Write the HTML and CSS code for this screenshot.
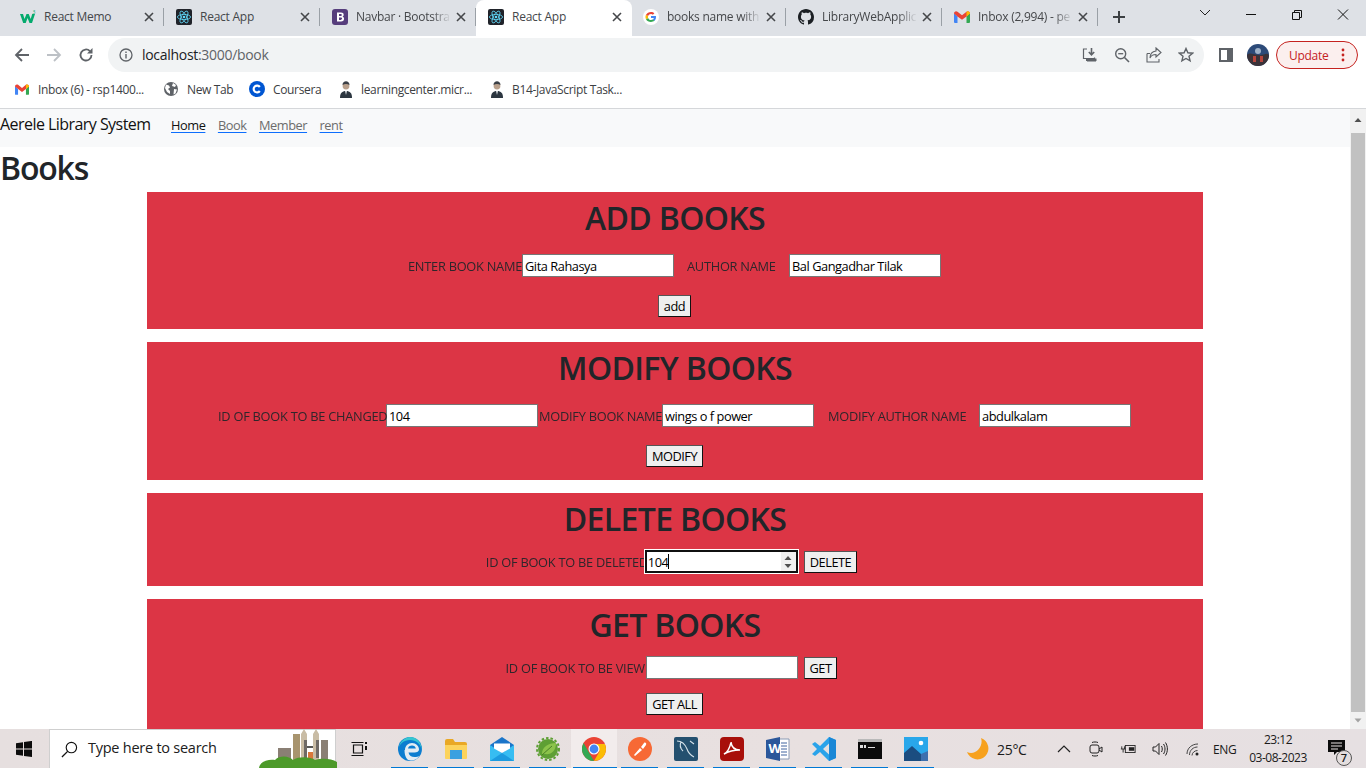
FILE: index.html
```html
<!DOCTYPE html>
<html lang="en">
<head>
<meta charset="utf-8">
<title>React App</title>
<link rel="stylesheet" href="styles.css">
</head>
<body>
<svg class="sprite" width="0" height="0">
  <symbol id="react" viewBox="0 0 16 16"><rect width="16" height="16" rx="2" fill="#20232a"/><g fill="none" stroke="#61dafb" stroke-width=".8"><ellipse cx="8" cy="8" rx="6.6" ry="2.6"/><ellipse cx="8" cy="8" rx="6.6" ry="2.6" transform="rotate(60 8 8)"/><ellipse cx="8" cy="8" rx="6.6" ry="2.6" transform="rotate(120 8 8)"/></g><circle cx="8" cy="8" r="1.3" fill="#61dafb"/></symbol>
  <symbol id="close" viewBox="0 0 10 10"><path d="M1 1l8 8M9 1l-8 8" stroke="#45474a" stroke-width="1.6" fill="none"/></symbol>
  <symbol id="gmail" viewBox="0 0 16 12"><path d="M0 2v9a1 1 0 0 0 1 1h2.500V5.500z" fill="#4285f4"/><path d="M16 2v9a1 1 0 0 1-1 1h-2.500V5.500z" fill="#34a853"/><path d="M0 2.500C0 .5 2 -.5 3.500 .7L8 4.200 12.500 .7C14 -.5 16 .5 16 2.500L12.500 5.500 8 8.800 3.500 5.500z" fill="#ea4335"/><path d="M12.500 .7C14 -.5 16 .5 16 2.500L12.500 5.500z" fill="#fbbc04"/></symbol>
  <symbol id="person" viewBox="0 0 14 18"><path d="M1 18c0-5 2-7 6-7s6 2 6 7z" fill="#2c3640"/><path d="M6 11h2l-1 4z" fill="#dfe3e6"/><circle cx="7" cy="6" r="3.400" fill="#b9a08c"/><path d="M3.500 5c0-5 7-5 7 0-2-1.500-5-1.500-7 0z" fill="#3a3f46"/></symbol>
</svg>

<div class="tabstrip">
  <div class="tab">
    <svg class="fav" viewBox="0 0 16 16"><path d="M0 5h3l1.500 5L6.500 5h2.200l2 5L12.200 5H15l-3 9H9.500L7.600 9 5.700 14H3.200z" fill="#04aa6d"/><text x="12.500" y="5" class="w3s">3</text></svg>
    <span class="title">React Memo</span><svg class="x"><use href="#close"/></svg>
  </div>
  <div class="tab">
    <svg class="fav"><use href="#react"/></svg>
    <span class="title">React App</span><svg class="x"><use href="#close"/></svg>
  </div>
  <div class="tab">
    <svg class="fav" viewBox="0 0 16 16"><rect width="16" height="16" rx="3" fill="#563d7c"/><path d="M5 3.500h4c1.700 0 2.700.9 2.700 2.200 0 1-.6 1.700-1.500 1.900 1.100.2 1.900 1 1.900 2.200 0 1.500-1.100 2.700-3.100 2.700H5zm2 1.600v2h1.500c.9 0 1.300-.4 1.300-1s-.4-1-1.200-1zm0 3.500v2.300h1.800c.9 0 1.300-.4 1.300-1.200 0-.7-.5-1.100-1.400-1.100z" fill="#fff"/></svg>
    <span class="title fade">Navbar · Bootstra</span><svg class="x"><use href="#close"/></svg>
  </div>
  <div class="tab tab-active">
    <svg class="fav"><use href="#react"/></svg>
    <span class="title">React App</span><svg class="x"><use href="#close"/></svg>
  </div>
  <div class="tab tab-after">
    <svg class="fav" viewBox="0 0 16 16"><circle cx="8" cy="8" r="8" fill="#fff"/><path d="M13 8.100c0-.4 0-.7-.1-1H8v2h2.800c-.1.700-.5 1.200-1 1.600l1.600 1.200C12.400 11 13 9.700 13 8.100z" fill="#4285f4"/><path d="M8 13c1.400 0 2.500-.5 3.400-1.200l-1.600-1.200c-.5.300-1.100.5-1.800.5-1.300 0-2.500-.9-2.900-2.100L3 10.200C3.900 11.900 5.800 13 8 13z" fill="#34a853"/><path d="M5.100 9c-.2-.7-.2-1.300 0-2L3 5.800c-.7 1.400-.7 3 0 4.400z" fill="#fbbc04"/><path d="M8 5c.8 0 1.400.3 1.900.8l1.500-1.500C10.500 3.500 9.400 3 8 3 5.800 3 3.900 4.100 3 5.800L5.100 7C5.500 5.900 6.700 5 8 5z" fill="#ea4335"/></svg>
    <span class="title fade">books name with</span><svg class="x"><use href="#close"/></svg>
  </div>
  <div class="tab">
    <svg class="fav" viewBox="0 0 16 16"><path fill="#1b1f23" d="M8 0C3.580 0 0 3.580 0 8c0 3.540 2.290 6.530 5.470 7.590.4.070.55-.17.55-.38 0-.19-.01-.82-.01-1.490-2.010.37-2.530-.49-2.690-.94-.09-.23-.48-.94-.82-1.130-.28-.15-.68-.52-.01-.53.630-.01 1.080.58 1.230.82.720 1.210 1.870.87 2.330.66.070-.52.280-.87.510-1.070-1.780-.2-3.640-.89-3.640-3.950 0-.87.310-1.590.820-2.150-.080-.2-.360-1.020.080-2.120 0 0 .670-.21 2.200.82.640-.18 1.320-.27 2-.27s1.360.09 2 .27c1.530-1.040 2.200-.82 2.200-.82.440 1.100.160 1.920.080 2.120.510.560.820 1.270.820 2.150 0 3.070-1.870 3.750-3.650 3.950.290.250.540.730.540 1.480 0 1.070-.010 1.930-.010 2.200 0 .210.150.460.550.380A8.013 8.013 0 0 0 16 8c0-4.420-3.580-8-8-8z"/></svg>
    <span class="title fade">LibraryWebApplic</span><svg class="x"><use href="#close"/></svg>
  </div>
  <div class="tab">
    <svg class="fav fav-gmail"><use href="#gmail"/></svg>
    <span class="title fade">Inbox (2,994) - pe</span><svg class="x"><use href="#close"/></svg>
  </div>
  <svg class="newtab" viewBox="0 0 12 12"><path d="M6 0v12M0 6h12" stroke="#3c4043" stroke-width="2" fill="none"/></svg>
  <div class="winctl">
    <svg class="wc" viewBox="0 0 46 32"><path d="M18 10l5 5 5-5" stroke="#222" fill="none"/></svg>
    <svg class="wc" viewBox="0 0 46 32"><path d="M18 14.500h10" stroke="#111" fill="none"/></svg>
    <svg class="wc" viewBox="0 0 46 32"><path d="M18.500 12.500h7v7h-7zM20.500 12.500v-2h7v7h-2" stroke="#111" fill="none"/></svg>
    <svg class="wc" viewBox="0 0 46 32"><path d="M18 9.500l10 10M28 9.500l-10 10" stroke="#111" fill="none"/></svg>
  </div>
</div>

<div class="toolbar">
  <svg class="nav-ic ic-first" viewBox="0 0 16 16"><path d="M15 8H2M8 2L2 8l6 6" stroke="#5f6368" stroke-width="1.800" fill="none"/></svg>
  <svg class="nav-ic" viewBox="0 0 16 16"><path d="M1 8h13M8 2l6 6-6 6" stroke="#bdc1c6" stroke-width="1.800" fill="none"/></svg>
  <svg class="nav-ic" viewBox="0 0 16 16"><path d="M13.500 8a5.500 5.500 0 1 1-1.600-3.900" stroke="#5f6368" stroke-width="1.800" fill="none"/><path d="M14.500 1v5.500H9z" fill="#5f6368"/></svg>
  <div class="omnibox">
    <svg class="info" viewBox="0 0 14 14"><circle cx="7" cy="7" r="6" stroke="#5f6368" stroke-width="1.300" fill="none"/><path d="M6.300 6h1.400v4.400H6.300zM6.300 3.500h1.400v1.400H6.300z" fill="#5f6368"/></svg>
    <span class="url"><span class="host">localhost</span>:3000/book</span>
    <svg class="omni-ic" viewBox="0 0 16 16"><path d="M1.500 3.500v8h11v-1M5 2h-3.500v1.500M5 14h9" stroke="#5f6368" stroke-width="1.200" fill="none"/><path d="M9.500 1v6M6.800 5l2.700 2.800L12.200 5" stroke="#5f6368" stroke-width="1.600" fill="none"/><path d="M4 11.500h10.500V14H4z" fill="#5f6368"/></svg>
    <svg class="omni-ic" viewBox="0 0 16 16"><circle cx="6.700" cy="6.700" r="5" stroke="#5f6368" stroke-width="1.400" fill="none"/><path d="M10.500 10.500l4.500 4.500" stroke="#5f6368" stroke-width="1.600"/><path d="M4.200 6.700h5" stroke="#5f6368" stroke-width="1.300"/></svg>
    <svg class="omni-ic" viewBox="0 0 16 16"><path d="M1 6.500V15h12v-3M1 6.500h3" stroke="#5f6368" stroke-width="1.100" fill="none"/><path d="M10 1l5 4.500L10 10V7.500c-3 0-5 1-6 3.500 0-4 2-6.500 6-7z" stroke="#5f6368" stroke-width="1.100" fill="none"/></svg>
    <svg class="omni-ic" viewBox="0 0 16 16"><path d="M8 1.500l1.900 4.300 4.700.4-3.600 3.100 1.100 4.600L8 11.500l-4.100 2.400L5 9.300 1.400 6.200l4.700-.4z" stroke="#5f6368" stroke-width="1.400" fill="none"/></svg>
  </div>
  <svg class="panel" viewBox="0 0 14 14"><path d="M0 0h14v14H0z" fill="#5f6368"/><path d="M2 2h6v10H2z" fill="#fff"/></svg>
  <svg class="avatar" viewBox="0 0 22 22"><circle cx="11" cy="11" r="11" fill="#2c4a78"/><path d="M0 11a11 11 0 0 0 22 0c-3-3-5 1-11 0S3 8 0 11z" fill="#3a3238"/><circle cx="11" cy="7" r="3" fill="#9fb2c8"/><path d="M6 12h3v6H6zM13 12h3v6h-3z" fill="#b5453c"/></svg>
  <div class="update"><span class="update-text">Update</span><svg class="kebab" viewBox="0 0 4 14"><circle cx="2" cy="2" r="1.400"/><circle cx="2" cy="7" r="1.400"/><circle cx="2" cy="12" r="1.400"/></svg></div>
</div>

<div class="bookmarks">
  <div class="bm"><svg class="bm-ic bm-gmail"><use href="#gmail"/></svg><span>Inbox (6) - rsp1400...</span></div>
  <div class="bm"><svg class="bm-ic" viewBox="0 0 14 14"><circle cx="7" cy="7" r="7" fill="#5f6368"/><path d="M2 2.500l3 1 1 2-2 1.500 2 2v3L3 10 1 6zM9 1l3 2-1 2-3-1zM10 7l3 .5-1.500 4-2 1z" fill="#fff"/></svg><span>New Tab</span></div>
  <div class="bm"><svg class="bm-ic bm-c" viewBox="0 0 16 16"><circle cx="8" cy="8" r="8" fill="#0056d2"/><path d="M10.800 10a3.400 3.400 0 1 1 0-4" stroke="#fff" stroke-width="2.200" fill="none"/></svg><span>Coursera</span></div>
  <div class="bm"><svg class="bm-ic bm-p"><use href="#person"/></svg><span>learningcenter.micr...</span></div>
  <div class="bm"><svg class="bm-ic bm-p"><use href="#person"/></svg><span>B14-JavaScript Task...</span></div>
</div>

<div class="viewport">
  <div class="page">
    <nav class="navbar">
      <span class="brand">Aerele Library System</span>
      <a class="link link-home" href="#">Home</a>
      <a class="link" href="#">Book</a>
      <a class="link" href="#">Member</a>
      <a class="link" href="#">rent</a>
    </nav>
    <h1 class="page-title">Books</h1>
    <main class="stack">
      <section class="card">
        <h2 class="card-title">ADD BOOKS</h2>
        <div class="row row-shift">
          <label class="lbl w114">ENTER BOOK NAME</label>
          <input class="field" type="text" value="Gita Rahasya">
          <label class="lbl w89 gap13">AUTHOR NAME</label>
          <input class="field gap13" type="text" value="Bal Gangadhar Tilak">
        </div>
        <div class="row row-btn"><button class="btn">add</button></div>
      </section>
      <section class="card">
        <h2 class="card-title">MODIFY BOOKS</h2>
        <div class="row row-shift">
          <label class="lbl w168">ID OF BOOK TO BE CHANGED</label>
          <input class="field" type="text" value="104">
          <label class="lbl w123 gap1">MODIFY BOOK NAME</label>
          <input class="field" type="text" value="wings o f power">
          <label class="lbl w139 gap14">MODIFY AUTHOR NAME</label>
          <input class="field gap12" type="text" value="abdulkalam">
        </div>
        <div class="row row-btn"><button class="btn">MODIFY</button></div>
      </section>
      <section class="card card-tight">
        <h2 class="card-title title-tight">DELETE BOOKS</h2>
        <div class="row row-tight">
          <label class="lbl w159">ID OF BOOK TO BE DELETED</label>
          <div class="field field-focus"><span class="val">104</span><span class="caret"></span>
            <span class="spin"><svg viewBox="0 0 10 16"><path d="M5 2l3.500 4h-7zM5 14l3.500-4h-7z" fill="#505050"/></svg></span>
          </div>
          <button class="btn gap6">DELETE</button>
        </div>
      </section>
      <section class="card card-last">
        <h2 class="card-title title-tight">GET BOOKS</h2>
        <div class="row row-tight">
          <label class="lbl w140">ID OF BOOK TO BE VIEW</label>
          <input class="field" type="text" value="">
          <button class="btn gap6">GET</button>
        </div>
        <div class="row row-btn2"><button class="btn">GET ALL</button></div>
      </section>
    </main>
  </div>
  <div class="scrollbar">
    <svg class="arrow" viewBox="0 0 16 16"><path d="M4.500 10L8 6l3.500 4z" fill="#505050"/></svg>
    <div class="thumb"></div>
    <svg class="arrow" viewBox="0 0 16 16"><path d="M4.500 6L8 10l3.500-4z" fill="#a3a3a3"/></svg>
  </div>
</div>

<footer class="taskbar">
  <svg class="start" viewBox="0 0 16 16"><path d="M0 2.200l7-1v6.300H0zM8 1l8-1.100v7.600H8zM0 8.500h7v6.300l-7-1zM8 8.500h8V16l-8-1.100z" fill="#0c0c0c"/></svg>
  <div class="search">
    <svg class="lens" viewBox="0 0 18 18"><circle cx="11" cy="7" r="5.500" stroke="#111" stroke-width="1.200" fill="none"/><path d="M7 11l-6 6" stroke="#111" stroke-width="1.400"/></svg>
    <span class="search-text">Type here to search</span>
    <svg class="skyline" viewBox="0 0 78 40"><path d="M19 20h13v14H19zM62 12h7v20h-7z" fill="#8a7f74"/><path d="M34 6h7v26h-7z" fill="#a8946e"/><path d="M42 6l3-5 3 5v26h-6zM54 6l3-5 3 5v26h-6z" fill="#c9bca5"/><path d="M45 12h3v18h-3zM57 12h3v18h-3z" fill="#6f6a66"/><path d="M48 18h6v2h-6z" fill="#555"/><path d="M49 24h5v8h-5z" fill="#d9773a"/><path d="M0 40c1-7 10-9 16-8 5-5 14-4 18 0 6-4 18-3 22 0 6-2 16-2 22 2v6z" fill="#4d9a2a"/></svg>
  </div>
  <div class="tb-item">
    <svg class="tb-ic tb-small" viewBox="0 0 16 16"><path d="M2.500 4h9v8h-9zM.500 1.500h12M.500 14.500h12" stroke="#111" stroke-width="1.200" fill="none"/><path d="M14 1h2v2h-2zM14 5h2v4h-2z" fill="#111"/></svg>
  </div>
  <div class="tb-spacer"></div>
  <div class="tb-item on">
    <svg class="tb-ic" viewBox="0 0 24 24"><circle cx="12" cy="12" r="12" fill="#0c7dd0"/><path d="M23.800 13.500C23 7 18 3 12 3 6 3 .8 7 .2 13 1 5 7 0 12 0c7 0 12 6 11.800 13.500z" fill="#37c6d0"/><path d="M7 13c0-4 3-7 7-7 4 0 7 3 7 6.500 0 2-2 3-4.500 3h-6c.5 3 3 4.500 6 4.500 2 0 4-.5 5-1.500-1.500 3-5 5-9 5-3 0-6-3-6-10.500z" fill="#e3ecf3"/><path d="M10 11.500c.2-2 2-3 4-3 2 0 3.500 1 3.800 3z" fill="#0c7dd0"/></svg>
  </div>
  <div class="tb-item on">
    <svg class="tb-ic" viewBox="0 0 24 22"><path d="M1 3a2 2 0 0 1 2-2h6l2 3h10a2 2 0 0 1 2 2v3H1z" fill="#e9a825"/><path d="M1 7h22v13a1 1 0 0 1-1 1H2a1 1 0 0 1-1-1z" fill="#fcd35c"/><path d="M6 12h12v9H6z" fill="#3aa0e0"/></svg>
  </div>
  <div class="tb-item on">
    <svg class="tb-ic" viewBox="0 0 24 24"><path d="M0 8l12-8 12 8v16H0z" fill="#1b75c9"/><path d="M0 8l12 8 12-8v16H0z" fill="#37bdf2"/><path d="M4 6.500h16v5l-8 4.500-8-4.500z" fill="#fff"/><path d="M0 24l12-8 12 8z" fill="#1c9be0"/></svg>
  </div>
  <div class="tb-item on">
    <svg class="tb-ic" viewBox="0 0 24 24"><circle cx="12" cy="12" r="10" fill="#5e9f34"/><circle cx="12" cy="12" r="11" fill="none" stroke="#5e9f34" stroke-width="2" stroke-dasharray="2.500 2"/><path d="M6 17C6 10 12 6 20 6c0 8-5 12-11 11" fill="#8bc34a"/><path d="M6 18L16 9" stroke="#4a7f28"/></svg>
  </div>
  <div class="tb-item on tb-active">
    <svg class="tb-ic" viewBox="0 0 24 24"><circle cx="12" cy="12" r="12" fill="#ea4335"/><path d="M12 24A12 12 0 0 1 1.600 6L7 15.500 12 24z" fill="#34a853"/><path d="M12 24l5.500-9.500L12 7h10.900A12 12 0 0 1 12 24z" fill="#fbbc04"/><circle cx="12" cy="12" r="5.500" fill="#fff"/><circle cx="12" cy="12" r="4.400" fill="#4285f4"/></svg>
  </div>
  <div class="tb-item on">
    <svg class="tb-ic" viewBox="0 0 24 24"><circle cx="12" cy="12" r="12" fill="#f76935"/><path d="M6 18l6-7 2 2-7 6zM13 10l3-4c1-1 3 0 2 2l-3 4z" fill="#fff"/></svg>
  </div>
  <div class="tb-item on">
    <svg class="tb-ic" viewBox="0 0 24 24"><rect width="24" height="24" rx="2" fill="#24506f"/><path d="M3 4c5 0 8 3 10 8 1 3 3 6 7 8M7 5c-2 4 0 7 2 9M16 4l4 3" stroke="#d5e2ea" stroke-width="1.100" fill="none"/></svg>
  </div>
  <div class="tb-item on">
    <svg class="tb-ic" viewBox="0 0 24 24"><rect width="24" height="24" rx="4" fill="#a80f0a"/><path d="M4 17c3-1 6-6 7-12 .5 5 3 8 9 8-6 0-11 1-16 4z" stroke="#fff" stroke-width="1.500" fill="none"/></svg>
  </div>
  <div class="tb-item on">
    <svg class="tb-ic" viewBox="0 0 24 24"><path d="M13 2h10v20H13z" fill="#fff" stroke="#8a9bb5"/><path d="M15 6h6M15 9h6M15 12h6M15 15h6M15 18h6" stroke="#41659f"/><path d="M0 3l14-3v24L0 21z" fill="#2b579a"/><text x="2.500" y="16" class="word-w">W</text></svg>
  </div>
  <div class="tb-item on">
    <svg class="tb-ic" viewBox="0 0 24 24"><path d="M17 0l7 3v18l-7 3-9-9-5 4-3-2 5-5-5-5 3-2 5 4z" fill="#2aa3ea"/><path d="M17 0l7 3v18l-7 3z" fill="#1a87d6"/><path d="M17 6.500L11 12l6 5.500z" fill="#e4e0e0"/></svg>
  </div>
  <div class="tb-item on">
    <svg class="tb-ic" viewBox="0 0 24 20"><rect width="24" height="20" fill="#0b0b0b"/><rect width="24" height="3" fill="#b9b9b9"/><path d="M2 6h3v3H2zM6 6h2v3H6zM10 8h7v1h-7z" fill="#ddd"/></svg>
  </div>
  <div class="tb-item on">
    <svg class="tb-ic" viewBox="0 0 24 24"><rect width="24" height="24" fill="#29a7ea"/><circle cx="17" cy="6" r="2.300" fill="#fff"/><path d="M0 24V16l8-7 9 8 7 3v4z" fill="#1b4d80"/><path d="M17 17l7-3v10h-7z" fill="#3c6fae"/></svg>
  </div>
  <div class="tray">
    <svg class="moon" viewBox="0 0 22 22"><path d="M14 0a11 11 0 1 1-14 14C8 18 17 9 14 0z" fill="#f7a11d"/></svg>
    <span class="temp">25°C</span>
    <svg class="tr-ic chev" viewBox="0 0 14 14"><path d="M1 10l6-6 6 6" stroke="#222" stroke-width="1.200" fill="none"/></svg>
    <svg class="tr-ic" viewBox="0 0 16 16"><rect x="2" y="4" width="9" height="8" rx="2" stroke="#222" fill="none"/><path d="M11 8l3-2v5l-3-2M4 1.500c2-.7 4-.7 6 0M4 14.500c2 .7 4 .7 6 0" stroke="#222" fill="none"/></svg>
    <svg class="tr-ic" viewBox="0 0 18 16"><rect x="6" y="4" width="11" height="8" stroke="#222" fill="none"/><rect x="10" y="6" width="6" height="4" fill="#222"/><path d="M1 8h5M2 5v3M5 5v3M3.500 8v4" stroke="#222" fill="none"/></svg>
    <svg class="tr-ic" viewBox="0 0 16 16"><path d="M1 6h2.500L7 2.500v11L3.500 10H1zM9.500 5c1 2 1 4 0 6M11.500 3c2 3 2 7 0 10M13.500 1.500c2.500 4 2.500 9 0 13" stroke="#222" fill="none"/></svg>
    <svg class="tr-ic tr-wifi" viewBox="0 0 16 16"><path d="M1 13c0-6 5-10 11-10M3.500 14c0-5 4-8 8-8M6 14.500c0-3 3-5 5.500-5" stroke="#444" fill="none"/><circle cx="11" cy="13" r="1.500" fill="#222"/></svg>
    <span class="lang">ENG</span>
    <div class="clock"><span>23:12</span><span>03-08-2023</span></div>
    <div class="notif">
      <svg class="notif-ic" viewBox="0 0 17 16"><path d="M0 0h17v12H9l-3 3v-3H0z" fill="#0c0c0c"/><path d="M3 3h11M3 6h11M3 9h7" stroke="#e6e0e0"/></svg>
      <span class="badge">7</span>
    </div>
  </div>
</footer>
</body>
</html>
```
FILE: styles.css
```css
* { box-sizing: border-box; }
html, body { margin: 0; height: 100%; }
body {
  width: 1366px; height: 768px; overflow: hidden;
  display: flex; flex-direction: column;
  font-family: "Open Sans", "Noto Sans", sans-serif;
  color: #212529; background: #fff;
}
.sprite { position: absolute; }

/* tab strip */
.tabstrip { height: 36px; flex: none; display: flex; align-items: stretch; background: #dee1e6; padding-left: 8px; position: relative; }
.tab { width: 156px; height: 34px; display: flex; align-items: center; padding: 0 8px 0 12px; position: relative; flex: none; }
.tab::after { content: ""; position: absolute; right: 0; top: 8px; height: 18px; width: 1px; background: #9aa0a6; }
.tab-active { background: #fff; height: 36px; border-radius: 8px 8px 0 0; padding-bottom: 2px; }
.tab-active::after { display: none; }
.tab-after { width: 154px; padding-left: 11px; }
.fav { width: 16px; height: 16px; flex: none; margin-right: 8px; }
.fav-gmail { height: 12px; }
.w3s { font-size: 5px; fill: #04aa6d; }
.word-w { font-size: 13px; font-weight: 700; fill: #fff; font-family: "Open Sans", sans-serif; }
.title { flex: 1; min-width: 0; overflow: hidden; white-space: nowrap; font-size: 12px; line-height: 16px; letter-spacing: -.25px; color: #45474a; margin-top: -1px; }
.fade { -webkit-mask-image: linear-gradient(90deg, #000 80%, transparent); mask-image: linear-gradient(90deg, #000 80%, transparent); }
.x { width: 10px; height: 10px; flex: none; margin-left: 5px; margin-right: 2px; }
.newtab { width: 12px; height: 12px; margin: 11px 0 0 15px; flex: none; }
.winctl { margin-left: auto; display: flex; }
.wc { width: 46px; height: 32px; display: block; }

/* toolbar */
.toolbar { height: 36px; flex: none; background: #fff; display: flex; align-items: center; padding-top: 2px; }
.nav-ic { width: 16px; height: 16px; margin-right: 16px; flex: none; }
.ic-first { margin-left: 14px; }
.omnibox { width: 1096px; height: 34px; margin-left: -2px; background: #f1f3f4; border-radius: 17px; display: flex; align-items: center; padding: 0 10px 0 11px; flex: none; }
.info { width: 14px; height: 14px; margin-right: 9px; flex: none; }
.url { font-size: 14px; line-height: 18px; margin-top: -1px; letter-spacing: -.3px; color: #5f6368; flex: 1; }
.host { color: #202124; }
.omni-ic { width: 16px; height: 16px; margin-left: 16px; flex: none; }
.panel { width: 14px; height: 14px; margin-left: 15px; flex: none; }
.avatar { width: 22px; height: 22px; margin-left: 14px; flex: none; }
.update { width: 82px; height: 28px; margin-left: 7px; border: 1px solid #c5221f; border-radius: 14px; background: #fbefee; display: flex; align-items: center; padding-left: 12px; flex: none; }
.update-text { font-size: 12px; color: #c5221f; letter-spacing: -.3px; }
.kebab { width: 4px; height: 14px; margin-left: 13px; fill: #c5221f; }

/* bookmarks */
.bookmarks { height: 37px; flex: none; background: #fff; border-bottom: 1px solid #d5d7da; padding-bottom: 2px; display: flex; align-items: center; font-size: 12px; letter-spacing: -.35px; color: #3c4043; }
.bm { display: flex; align-items: center; white-space: nowrap; }
.bm:nth-child(1) { margin-left: 15px; width: 149px; }
.bm:nth-child(2) { width: 85px; }
.bm:nth-child(3) { width: 90px; }
.bm:nth-child(4) { width: 151px; }
.bm-ic { width: 14px; height: 14px; margin-right: 9px; flex: none; }
.bm-gmail { height: 11px; }
.bm-c { width: 16px; height: 16px; margin-right: 8px; }
.bm-p { height: 18px; margin-right: 8px; }

/* page */
.viewport { height: 620px; flex: none; display: flex; overflow: hidden; }
.page { flex: 1; min-width: 0; overflow: hidden; background: #fff; }
.navbar { height: 38px; background: #f8f9fa; display: flex; align-items: center; padding: 0 0 8px 0; }
.brand { font-size: 16px; letter-spacing: -.55px; color: #111; margin-right: 20px; width: 151px; white-space: nowrap; }
.link { font-size: 12.800px; letter-spacing: -.45px; color: #6c6c6c; margin-right: 12.500px; padding-top: 2px; text-underline-offset: 2px; text-decoration-color: #0d6efd; }
.link-home { color: #111; }
.page-title { margin: 0; height: 45px; font-size: 32px; line-height: 42px; font-weight: 600; letter-spacing: -1.2px; color: #212529; }
.stack { width: 1056px; margin: 0 auto; display: flex; flex-direction: column; gap: 13px; }
.card { background: #dc3545; padding-top: 7px; height: 137px; display: flex; flex-direction: column; align-items: center; }
.card:nth-child(2) { height: 138px; }
.card-tight { height: 93px; }
.card-last { height: 140px; }
.card-title { margin: 0 0 17px; font-size: 32px; line-height: 38px; font-weight: 600; letter-spacing: -.65px; color: #212529; white-space: nowrap; }
.title-tight { margin-bottom: 12px; }
.row { display: flex; align-items: center; justify-content: center; height: 23px; }
.row-shift { margin-right: 1px; }
.row-tight { margin-right: 7px; }
.row-btn { margin-top: 17px; margin-right: 1px; }
.row-btn2 { margin-top: 13px; margin-right: 1px; }
.lbl { font-size: 12.800px; letter-spacing: -.25px; color: #212529; white-space: nowrap; opacity: .92; }
.w114 { width: 114px; } .w89 { width: 89px; } .w168 { width: 168px; } .w123 { width: 123px; }
.w139 { width: 139px; } .w159 { width: 159px; } .w140 { width: 140px; }
.gap13 { margin-left: 13px; } .gap1 { margin-left: 1px; } .gap14 { margin-left: 14px; } .gap12 { margin-left: 12px; } .gap6 { margin-left: 6px; }
.field { width: 152px; height: 23px; border: 1px solid #767676; background: #fff; padding: 0 2px; font: 12.800px "Open Sans", sans-serif; letter-spacing: -.45px; color: #000; border-radius: 0; outline: none; }
.field-focus { width: 153px; border: 2px solid #101010; outline: 1px solid #fff; display: flex; align-items: center; position: relative; padding: 0 1px; }
.caret { width: 1px; height: 15px; background: #000; }
.spin { position: absolute; right: 0; top: 0; bottom: 0; width: 15px; background: #f0f0f0; display: flex; align-items: center; justify-content: center; }
.spin svg { width: 10px; height: 16px; }
.btn { height: 22px; padding: 0 5px; background: #efefef; border: 1px solid #111; border-top-color: #555; border-left-color: #555; border-radius: 0; font: 12.800px "Open Sans", sans-serif; letter-spacing: -.5px; color: #000; }

/* scrollbar */
.scrollbar { width: 16px; flex: none; background: #f1f1f1; display: flex; flex-direction: column; }
.arrow { width: 16px; height: 16px; flex: none; margin-top: 3px; }
.thumb { flex: 1; margin: 5px 1px 0; background: #c1c1c1; }
.thumb + .arrow { margin-top: 0; height: 17px; }

/* taskbar */
.taskbar { height: 40px; flex: none; background: linear-gradient(90deg, #e6dfdf, #e8e0e0 60%, #e6e0e2); display: flex; align-items: center; }
.start { width: 16px; height: 16px; margin: 0 17px 0 16px; flex: none; }
.search { width: 287px; height: 40px; background: #fff; border: 1px solid #cfcfcf; border-bottom-color: #c8c8c8; display: flex; align-items: center; position: relative; flex: none; padding-left: 11px; }
.lens { width: 17px; height: 17px; margin-right: 10px; flex: none; }
.search-text { font-size: 14.500px; line-height: 18px; margin-top: -2px; letter-spacing: -.25px; color: #202020; white-space: nowrap; }
.skyline { position: absolute; right: -2px; bottom: 0; width: 78px; height: 40px; }
.tb-item { width: 46px; height: 40px; flex: none; display: flex; align-items: center; justify-content: center; position: relative; }
.tb-spacer { width: 5px; flex: none; }
.tb-ic { width: 24px; height: 24px; }
.tb-small { width: 16px; height: 16px; }
.on::after { content: ""; position: absolute; left: 4px; right: 5px; bottom: 0; height: 2px; background: #0078d4; }
.tb-active { background: #f2ecec; }
.tb-active::after { left: 2px; right: 0; }
.tray { flex: 1; display: flex; align-items: center; height: 40px; min-width: 0; font-size: 12px; color: #1a1a1a; }
.moon { width: 22px; height: 22px; margin-left: 28px; flex: none; }
.temp { font-size: 14px; letter-spacing: -.3px; margin-left: 8px; width: 60px; flex: none; }
.tr-ic { width: 16px; height: 16px; flex: none; margin-right: 16px; }
.chev { width: 14px; height: 14px; margin-right: 17px; }
.tr-wifi { margin-left: 2px; }
.lang { margin-left: -5px; width: 24px; flex: none; letter-spacing: -.3px; }
.clock { width: 62px; margin-left: 10px; display: flex; flex-direction: column; align-items: center; line-height: 18px; letter-spacing: -.5px; flex: none; }
.notif { position: relative; width: 22px; height: 22px; margin-left: 17px; flex: none; }
.notif-ic { width: 17px; height: 16px; display: block; margin-top: 2px; margin-left: 2px; }
.badge { position: absolute; right: -4px; bottom: -6px; width: 16px; height: 16px; border-radius: 50%; border: 1px solid #555; background: #e4dede; font-size: 11px; font-weight: 600; line-height: 14px; text-align: center; }
```
